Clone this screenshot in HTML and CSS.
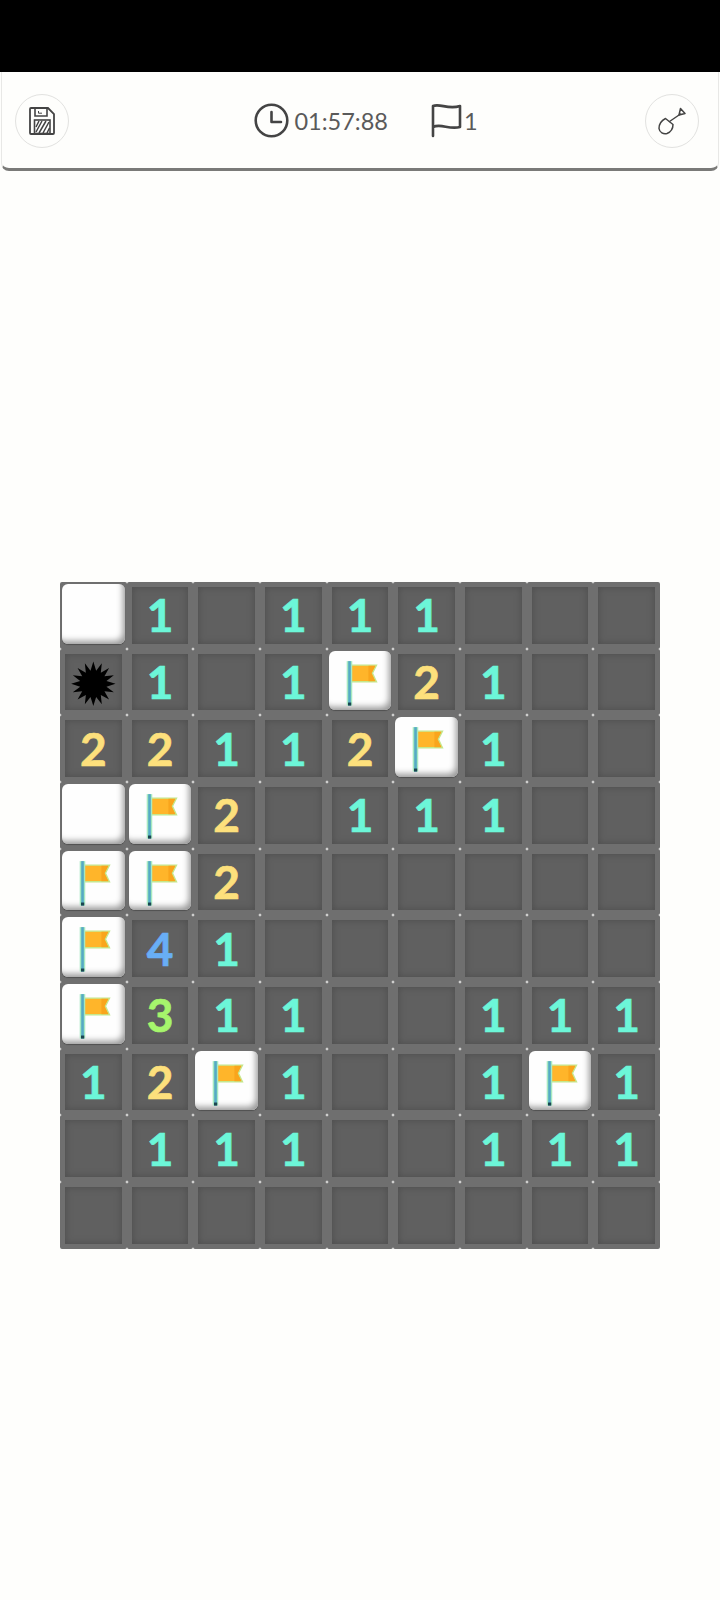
FILE: index.html
```html
<!DOCTYPE html>
<html lang="en">
<head>
<meta charset="utf-8">
<title>Minesweeper</title>
<link rel="stylesheet" href="styles.css">
</head>
<body>
<svg class="defs" width="0" height="0" aria-hidden="true">
  <defs>
    <filter id="soft" x="-20%" y="-20%" width="140%" height="140%"><feGaussianBlur stdDeviation="0.6"/></filter>
    <symbol id="flag" viewBox="0 0 66 66">
      <g filter="url(#soft)">
        <path d="M23.500 16H49L45 24L49 32.500H23.500Z" fill="#ffb52a" stroke="#c4e88e" stroke-width="1.400"/>
        <path d="M41 16.500H48L44 24L48 32H41Z" fill="#f9a51e"/>
        <rect x="19.500" y="12" width="5.500" height="44" fill="#a6e8c0"/>
        <rect x="21" y="12" width="2.600" height="44" fill="#55aac4"/>
        <rect x="20.800" y="53" width="3.200" height="3" fill="#1c4450"/>
      </g>
    </symbol>
    <symbol id="mine" viewBox="-33 -34.500 66 66">
      <polygon filter="url(#soft)" fill="#000" points="0,-22 2.800,-13 8.400,-20.300 7.400,-11 15.600,-15.600 11,-7.400 20.300,-8.400 13,-2.800 22,0 13,2.800 20.300,8.400 11,7.400 15.600,15.600 7.400,11 8.400,20.300 2.800,13 0,22 -2.800,13 -8.400,20.300 -7.400,11 -15.600,15.600 -11,7.400 -20.300,8.400 -13,2.800 -22,0 -13,-2.800 -20.300,-8.400 -11,-7.400 -15.600,-15.600 -7.400,-11 -8.400,-20.300 -2.800,-13"/>
    </symbol>
  </defs>
</svg>
<div class="statusbar"></div>
<header class="toolbar">
  <button class="round" type="button" aria-label="Save">
    <svg width="26" height="28" viewBox="0 0 26 28" fill="none" stroke="#444" stroke-width="1.600">
      <path d="M1 2a1 1 0 0 1 1-1H19L25 7V26a1 1 0 0 1-1 1H2a1 1 0 0 1-1-1Z" stroke-width="1.800"/>
      <path d="M6 1.500V9H18V1.500"/>
      <path d="M9.500 4V6.200H13" stroke-width="1"/>
      <rect x="5.500" y="13" width="15.500" height="13.500" fill="#fff"/>
      <path d="M7 25L13 14M10 26L17 14M14 26L20 15M7 20L10 14M18 26L20.500 21" stroke-width="1.500"/>
    </svg>
  </button>
  <div class="stats">
    <div class="stat timer">
      <svg width="35" height="35" viewBox="0 0 35 35" fill="none" stroke="#444" stroke-width="2.600" stroke-linecap="round" stroke-linejoin="round">
        <circle cx="17.500" cy="17.500" r="15.800"/>
        <path d="M17.500 9V19H27"/>
      </svg>
      <span>01:57:88</span>
    </div>
    <div class="stat flags">
      <svg width="31" height="35" viewBox="0 0 31 35" fill="none" stroke="#444" stroke-width="2.600" stroke-linecap="round" stroke-linejoin="round">
        <path d="M2 33V3C9 0 17 7 29 3V24C18 27 10 20 2 24"/>
      </svg>
      <span>1</span>
    </div>
  </div>
  <button class="round" type="button" aria-label="Dig">
    <svg width="28" height="28" viewBox="0 0 28 28" fill="none" stroke="#444" stroke-width="1.500" stroke-linejoin="round" stroke-linecap="round">
      <path d="M7.500 11.500L15 17.500C15 21.500 12.500 25 9 26.500C5.500 27.500 1.500 25.500 1 21.500C1 17 3.500 13.500 7.500 11.500Z"/>
      <path d="M11.500 14.500L22.500 7"/>
      <path d="M22.500 1.500L27 6.500L21 8Z"/>
    </svg>
  </button>
</header>
<main class="board">
  <div class="cell raised"></div><div class="cell n1">1</div><div class="cell"></div><div class="cell n1">1</div><div class="cell n1">1</div><div class="cell n1">1</div><div class="cell"></div><div class="cell"></div><div class="cell"></div>

  <div class="cell"><svg class="art"><use href="#mine"/></svg></div><div class="cell n1">1</div><div class="cell"></div><div class="cell n1">1</div><div class="cell raised"><svg class="art"><use href="#flag"/></svg></div><div class="cell n2">2</div><div class="cell n1">1</div><div class="cell"></div><div class="cell"></div>

  <div class="cell n2">2</div><div class="cell n2">2</div><div class="cell n1">1</div><div class="cell n1">1</div><div class="cell n2">2</div><div class="cell raised"><svg class="art"><use href="#flag"/></svg></div><div class="cell n1">1</div><div class="cell"></div><div class="cell"></div>

  <div class="cell raised"></div><div class="cell raised"><svg class="art"><use href="#flag"/></svg></div><div class="cell n2">2</div><div class="cell"></div><div class="cell n1">1</div><div class="cell n1">1</div><div class="cell n1">1</div><div class="cell"></div><div class="cell"></div>

  <div class="cell raised"><svg class="art"><use href="#flag"/></svg></div><div class="cell raised"><svg class="art"><use href="#flag"/></svg></div><div class="cell n2">2</div><div class="cell"></div><div class="cell"></div><div class="cell"></div><div class="cell"></div><div class="cell"></div><div class="cell"></div>

  <div class="cell raised"><svg class="art"><use href="#flag"/></svg></div><div class="cell n4">4</div><div class="cell n1">1</div><div class="cell"></div><div class="cell"></div><div class="cell"></div><div class="cell"></div><div class="cell"></div><div class="cell"></div>

  <div class="cell raised"><svg class="art"><use href="#flag"/></svg></div><div class="cell n3">3</div><div class="cell n1">1</div><div class="cell n1">1</div><div class="cell"></div><div class="cell"></div><div class="cell n1">1</div><div class="cell n1">1</div><div class="cell n1">1</div>

  <div class="cell n1">1</div><div class="cell n2">2</div><div class="cell raised"><svg class="art"><use href="#flag"/></svg></div><div class="cell n1">1</div><div class="cell"></div><div class="cell"></div><div class="cell n1">1</div><div class="cell raised"><svg class="art"><use href="#flag"/></svg></div><div class="cell n1">1</div>

  <div class="cell"></div><div class="cell n1">1</div><div class="cell n1">1</div><div class="cell n1">1</div><div class="cell"></div><div class="cell"></div><div class="cell n1">1</div><div class="cell n1">1</div><div class="cell n1">1</div>

  <div class="cell"></div><div class="cell"></div><div class="cell"></div><div class="cell"></div><div class="cell"></div><div class="cell"></div><div class="cell"></div><div class="cell"></div><div class="cell"></div>
</main>
</body>
</html>
```

FILE: styles.css
```css
* { box-sizing: border-box; }

html, body {
  margin: 0;
  height: 100%;
}

body {
  background: #fefefc;
  font-family: Lato, "Liberation Sans", sans-serif;
  overflow: hidden;
}

.defs { position: absolute; }

.statusbar {
  height: 72px;
  background: #000;
}

.toolbar {
  display: flex;
  align-items: center;
  height: 99px;
  margin: 0 1px;
  padding: 1px 19px 0 13px;
  background: #fefefc;
  border-left: 1px solid #e8e8e6;
  border-right: 1px solid #e8e8e6;
  border-bottom: 3px solid #7a7a78;
  border-radius: 0 0 8px 8px;
}

.round {
  flex: none;
  display: flex;
  align-items: center;
  justify-content: center;
  width: 54px;
  height: 54px;
  padding: 0;
  background: #fefefc;
  border: 1px solid #e2e2e0;
  border-radius: 50%;
}

.stats {
  flex: 1;
  display: flex;
  justify-content: center;
  align-items: center;
  gap: 43px;
  padding-left: 18px;
  color: #5a5a5a;
  font-size: 23.500px;
}

.stat {
  display: flex;
  align-items: center;
  gap: 5px;
}

.flags { gap: 2px; }

.board {
  display: grid;
  grid-template-columns: repeat(9, 1fr);
  grid-auto-rows: 66.67px;
  width: 600px;
  margin: 411px auto 0;
  background: #fefefc;
}

.cell {
  display: flex;
  align-items: center;
  justify-content: center;
  position: relative;
  border: 5px solid #6f6f6f;
  border-radius: 2px;
  background: #606060;
  box-shadow: inset 0 0 6px 1px #505050;
  font-size: 46px;
  font-weight: 700;
  -webkit-text-stroke: 0.7px currentColor;
  line-height: 1;
}

.raised {
  border: 0;
  background: #6f6f6f;
  box-shadow: none;
}

.raised::before {
  content: "";
  position: absolute;
  inset: 2px 2px 5px;
  background: #fefefe;
  border-radius: 6px;
  box-shadow: inset -4px -5px 6px -2px #989898, 0 1px 1px #505050;
}

.art {
  position: absolute;
  inset: -5px;
  width: 66.67px;
  height: 66.67px;
}

.raised .art { inset: 0; }

.n1 { color: #6cf6d8; }
.n2 { color: #fde07c; }
.n3 { color: #a6f56c; }
.n4 { color: #68aef5; }
```
